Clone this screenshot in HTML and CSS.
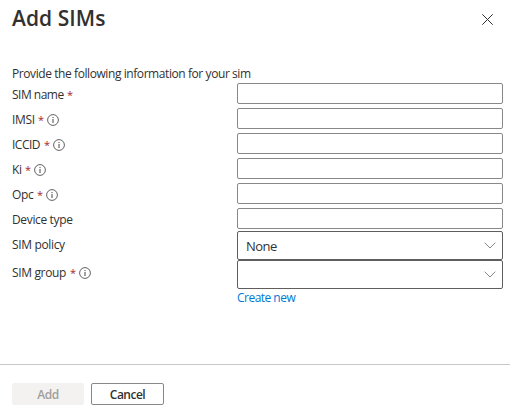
FILE: index.html
```html
<!DOCTYPE html>
<html lang="en">
<head>
<meta charset="utf-8">
<title>Add SIMs</title>
<link rel="stylesheet" href="styles.css">
</head>
<body>
<svg class="defs" aria-hidden="true">
  <symbol id="info" viewBox="0 0 12 12"><circle cx="6" cy="6" r="5.4" fill="none" stroke="currentColor" stroke-width=".85"/><path d="M6 5v4M6 3v1.1" stroke="currentColor" stroke-width="1"/></symbol>
  <symbol id="chevron" viewBox="0 0 12 7"><path d="M.7.7 6 6 11.3.7" fill="none" stroke="currentColor" stroke-width="1"/></symbol>
</svg>
<main class="panel">
  <header class="header">
    <h1 class="title">Add SIMs</h1>
    <svg class="close" viewBox="0 0 11 11"><path d="M.3.3l10.4 10.4M10.7.3.3 10.7" stroke="currentColor" stroke-width="1"/></svg>
  </header>
  <form class="form">
    <p class="intro">Provide the following information for your sim</p>
    <div class="row"><label class="label"><span class="name n1">SIM name</span><span class="req">*</span></label><div class="input"></div></div>
    <div class="row"><label class="label"><span class="name n2">IMSI</span><span class="req">*</span><svg class="info"><use href="#info"/></svg></label><div class="input"></div></div>
    <div class="row"><label class="label"><span class="name n3">ICCID</span><span class="req">*</span><svg class="info"><use href="#info"/></svg></label><div class="input"></div></div>
    <div class="row"><label class="label"><span class="name n4">Ki</span><span class="req">*</span><svg class="info"><use href="#info"/></svg></label><div class="input"></div></div>
    <div class="row"><label class="label"><span class="name n5">Opc</span><span class="req">*</span><svg class="info"><use href="#info"/></svg></label><div class="input"></div></div>
    <div class="row"><label class="label"><span class="name">Device type</span></label><div class="input"></div></div>
    <div class="row tall first"><label class="label"><span class="name">SIM policy</span></label><div class="input select"><span class="value">None</span><svg class="chevron"><use href="#chevron"/></svg></div></div>
    <div class="row tall"><label class="label"><span class="name n8">SIM group</span><span class="req">*</span><svg class="info"><use href="#info"/></svg></label><div class="input select"><span class="value"></span><svg class="chevron"><use href="#chevron"/></svg></div></div>
    <a class="link">Create new</a>
  </form>
  <footer class="footer">
    <button class="btn disabled" disabled>Add</button>
    <button class="btn cancel">Cancel</button>
  </footer>
</main>
</body>
</html>
```
FILE: styles.css
```css
* { box-sizing: border-box; }
body {
  margin: 0;
  background: #fff;
  color: #323130;
  font-family: "Open Sans", "Noto Sans", sans-serif;
  font-size: 12px;
  line-height: 16px;
  letter-spacing: -.35px;
}
.defs { display: block; width: 0; height: 0; }
.panel { height: 414px; display: flex; flex-direction: column; }
.header { height: 66px; padding: 4px 17px 0 12px; display: flex; justify-content: space-between; }
.title { margin: 0; font-size: 21px; line-height: 28px; font-weight: 600; letter-spacing: .05px; white-space: nowrap; }
.close { width: 11px; height: 11px; margin-top: 10px; }
.form { height: 298px; padding: 0 7px 0 12px; display: flex; flex-direction: column; }
.intro { margin: 0; height: 17px; white-space: nowrap; letter-spacing: -.42px; }
.row { display: grid; grid-template-columns: 225px 266px; height: 25px; align-items: start; }
.label { display: flex; height: 16px; margin-top: 4px; white-space: nowrap; }
.req { color: #a4262c; width: 6px; margin-left: 4px; font-size: 11px; line-height: 15px; }
.n1 { width: 51px; letter-spacing: -.5px; }
.n2 { width: 22px; }
.n3 { width: 28px; letter-spacing: -.5px; }
.n4 { width: 9px; }
.n5 { width: 21px; }
.n8 { width: 54px; }
.info { width: 12px; height: 12px; margin: 2.4px 0 0 3.2px; color: #484644; }
.input { height: 21px; border: 1px solid #8a8886; border-radius: 2px; }
.tall { height: 29px; }
.first { margin-top: -2px; }
.tall .label { margin-top: 5px; }
.first .label { margin-top: 6px; }
.tall .select { height: 29px; border-color: #605e5c; padding: 0 6px 0 8px; display: flex; align-items: center; justify-content: space-between; }
.value { font-size: 13px; letter-spacing: -.5px; }
.chevron { width: 12px; height: 7px; color: #8a8886; }
.link { margin: 1px 0 0 225px; color: #0078d4; white-space: nowrap; letter-spacing: -.52px; }
.footer { border-top: 1px solid #c8c8c8; height: 50px; padding: 18px 12px 0; display: flex; gap: 7px; }
.btn { height: 22px; padding: 1px 0 0; border: 1px solid #8a8886; border-radius: 2px; background: #fff; color: #323130; font: 600 12px/18px "Open Sans", sans-serif; letter-spacing: -.5px; }
.disabled { width: 72px; border-color: #f3f2f1; background: #f3f2f1; color: #a19f9d; }
.cancel { width: 73px; }
```
